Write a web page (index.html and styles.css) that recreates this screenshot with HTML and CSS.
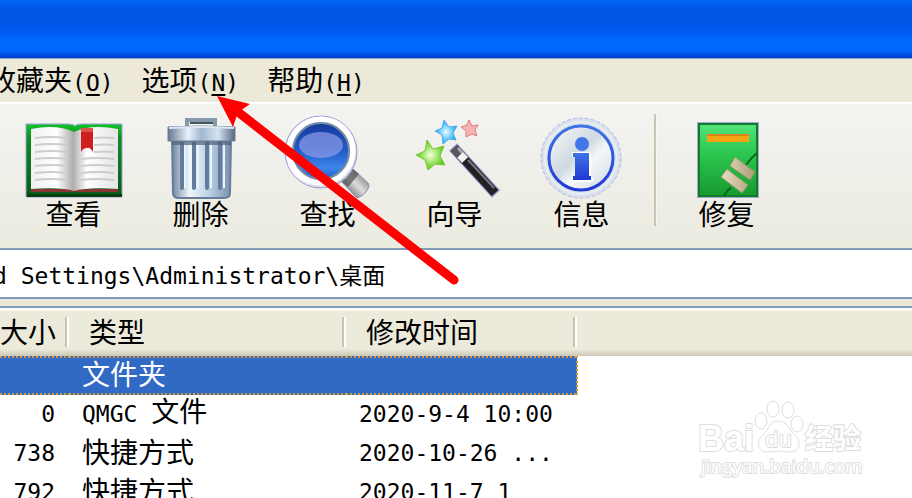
FILE: index.html
```html
<!DOCTYPE html>
<html lang="zh-CN">
  <head>
    <meta charset="UTF-8" />
    <meta name="viewport" content="width=device-width, initial-scale=1.0" />
    <title>桌面</title>
    <link rel="stylesheet" href="styles.css" />
  </head>

  <body>
    <header class="titlebar"></header>

    <nav class="menubar">
      <button class="menu-item">收藏夹<span class="key">(<u>O</u>)</span></button>
      <button class="menu-item">选项<span class="key">(<u>N</u>)</span></button>
      <button class="menu-item">帮助<span class="key">(<u>H</u>)</span></button>
    </nav>

    <div class="toolbar">
      <button class="tool">
        <svg class="tool-icon" viewBox="24 114 100 86">
          <defs>
            <linearGradient id="cover" x1="0" y1="0" x2="0" y2="1">
              <stop offset="0" stop-color="#12c429" />
              <stop offset="0.2" stop-color="#0f8c20" />
              <stop offset="1" stop-color="#08591a" />
            </linearGradient>
            <linearGradient id="page-left">
              <stop offset="0" stop-color="#f0f0f0" />
              <stop offset="0.6" stop-color="#fff" />
              <stop offset="1" stop-color="#aaa" />
            </linearGradient>
            <linearGradient id="page-right">
              <stop offset="0" stop-color="#b4b4b4" />
              <stop offset="0.3" stop-color="#fff" />
              <stop offset="1" stop-color="#e4e4e4" />
            </linearGradient>
          </defs>
          <path d="M26 124h42q6 0 7 2q1-2 7-2h40v73H26z" fill="url(#cover)" stroke="#9fa0e0" />
          <path d="M27 194h95v3H27z" fill="#06400f" />
          <path d="M31 189h43v3H31zM75 189h43v3H75z" fill="#8b3434" />
          <path d="M31 129q26-5 43 3v59q-12-4-43-2z" fill="url(#page-left)" />
          <path d="M74 132q17-8 44-3v60q-31-2-44 2z" fill="url(#page-right)" />
          <path
            d="M35 138q16-2 32 0M35 145q16-2 32 0M35 152q16-2 32 0M35 159q16-2 32 0M35 166q16-2 32 0M35 173q16-2 32 0M35 180q16-2 32 0M94 138q10-1 20 0M94 145q10-1 20 0M94 152q10-1 20 0M81 159q16-2 33 0M81 166q16-2 33 0M81 173q16-2 33 0M81 180q16-2 33 0"
            fill="none"
            stroke="#cdcdcd"
            stroke-width="2"
          />
          <path d="M81 128h12v24q-3-5-6-4q-4 0-6 4z" fill="#cf1e1e" />
          <path d="M81 128h12v4H81z" fill="#e0514a" />
        </svg>
        <span class="tool-label">查看</span>
      </button>
      <button class="tool">
        <svg class="tool-icon" viewBox="151 114 100 86">
          <defs>
            <linearGradient id="lid">
              <stop offset="0" stop-color="#64788f" />
              <stop offset="0.3" stop-color="#e9f2fa" />
              <stop offset="0.5" stop-color="#9fb7d0" />
              <stop offset="0.75" stop-color="#d5e3f2" />
              <stop offset="1" stop-color="#536981" />
            </linearGradient>
            <linearGradient id="can">
              <stop offset="0" stop-color="#6f859d" />
              <stop offset="0.3" stop-color="#f1f7fc" />
              <stop offset="0.65" stop-color="#b7cde4" />
              <stop offset="1" stop-color="#7890ac" />
            </linearGradient>
          </defs>
          <path d="M187 127v-7h28v7" fill="none" stroke="#8599ab" stroke-width="4" />
          <path d="M190 123h23" stroke="#445564" stroke-width="2" />
          <path d="M172 139h59l-1 54q0 5-6 5h-45q-6 0-6-5z" fill="url(#can)" stroke="#667d9c" stroke-width="2" />
          <path d="M182 143v45M194 143v45M207 143v45M220 143v45" stroke="#627d9b" stroke-width="4" stroke-linecap="round" />
          <path d="M185 143v45M198 143v45M211 143v45M224 143v45" stroke="#eaf3fb" stroke-width="2" />
          <path d="M172 141h59v4h-59z" fill="#4d6075" opacity="0.7" />
          <path d="M168 127q33-2 67 0v14h-67z" fill="url(#lid)" stroke="#687e97" />
          <path d="M169 128q32-2 65 0" fill="none" stroke="#dce8f2" stroke-width="2" />
        </svg>
        <span class="tool-label">删除</span>
      </button>
      <button class="tool">
        <svg class="tool-icon" viewBox="278 114 100 86">
          <defs>
            <linearGradient id="lens" x1="0" y1="0" x2="0" y2="1">
              <stop offset="0" stop-color="#153a9c" />
              <stop offset="0.5" stop-color="#225cc8" />
              <stop offset="0.8" stop-color="#3d86e8" />
              <stop offset="1" stop-color="#2258d0" />
            </linearGradient>
            <linearGradient id="rim" x1="0" y1="0" x2="1" y2="1">
              <stop offset="0" stop-color="#bcc9d6" />
              <stop offset="0.4" stop-color="#fff" />
              <stop offset="1" stop-color="#b9bec4" />
            </linearGradient>
            <linearGradient id="grip" x1="0" y1="1" x2="1" y2="0">
              <stop offset="0" stop-color="#333" />
              <stop offset="0.5" stop-color="#ddd" />
              <stop offset="1" stop-color="#555" />
            </linearGradient>
          </defs>
          <path d="M341 181l12-12l15 14q3 3-3 10q-6 6-9 4z" fill="url(#grip)" stroke="#8e8ebb" />
          <path d="M341 181l12-12l6 5l-11 13z" fill="#4c4f50" opacity="0.7" />
          <circle cx="321" cy="152" r="36" fill="url(#rim)" stroke="#9a99dd" stroke-width="1" />
          <circle cx="321" cy="151" r="32" fill="none" stroke="#fff" stroke-width="5" />
          <circle cx="321" cy="151" r="28" fill="url(#lens)" stroke="#7189a5" stroke-width="2" />
          <ellipse cx="321" cy="145" rx="22" ry="13" fill="#96a2ec" opacity="0.65" />
        </svg>
        <span class="tool-label">查找</span>
      </button>
      <button class="tool">
        <svg class="tool-icon" viewBox="405 114 100 86">
          <defs>
            <radialGradient id="star-blue">
              <stop offset="0" stop-color="#e8fbff" />
              <stop offset="1" stop-color="#12a9f2" />
            </radialGradient>
            <radialGradient id="star-green">
              <stop offset="0" stop-color="#f4ffd9" />
              <stop offset="1" stop-color="#55cc08" />
            </radialGradient>
          </defs>
          <path d="M444 120l5 7l8-1l-4 7l3 7l-7-1l-6 5l-1-9l-7-4l7-3z" fill="url(#star-blue)" stroke="#52aaf0" />
          <path d="M469 120l3 6l6-1l-3 5l2 6l-5-2l-6 3v-6l-5-4l6-2z" fill="#f4b4b4" stroke="#e27983" />
          <path d="M427 140l6 9l11-3l-4 10l5 9l-10-1l-7 6l-3-10l-9-5l9-4z" fill="url(#star-green)" stroke="#78c53c" />
          <path d="M453 147l43 47" stroke="#9b98cf" stroke-width="11" />
          <path d="M454 148l41 45" stroke="#202225" stroke-width="9" />
          <path d="M468 160l26 28" stroke="#777b80" stroke-width="2" />
          <path d="M454 148l11 12" stroke="#55585c" stroke-width="9" />
          <path d="M458 148l9 10" stroke="#a5a8ab" stroke-width="3" />
          <path d="M460 155l5 5" stroke="#f1f1f1" stroke-width="8" />
        </svg>
        <span class="tool-label">向导</span>
      </button>
      <button class="tool">
        <svg class="tool-icon" viewBox="532 114 100 86">
          <defs>
            <linearGradient id="disc" x1="0" y1="0" x2="1" y2="1">
              <stop offset="0" stop-color="#f7f9fb" />
              <stop offset="0.45" stop-color="#cfd9e1" />
              <stop offset="0.6" stop-color="#f4f7fa" />
              <stop offset="1" stop-color="#ccd7e0" />
            </linearGradient>
            <linearGradient id="info-blue" x1="0" y1="0" x2="0" y2="1">
              <stop offset="0" stop-color="#3d74e5" />
              <stop offset="1" stop-color="#2138d5" />
            </linearGradient>
          </defs>
          <circle cx="581" cy="158" r="40" fill="#d9e1ea" stroke="#b8b5eb" stroke-dasharray="4 2" />
          <circle cx="581" cy="158" r="36" fill="none" stroke="#e9eef3" stroke-width="2" />
          <circle cx="581" cy="158" r="32" fill="url(#disc)" stroke="url(#info-blue)" stroke-width="3" />
          <path d="M572 152h19v26h2v4h-21v-4h3v-21h-3z" fill="#fff" />
          <circle cx="582" cy="144" r="7" fill="#3f78e6" />
          <path d="M573 153h16v23h2v4h-18v-4h2v-19h-2z" fill="url(#info-blue)" />
        </svg>
        <span class="tool-label">信息</span>
      </button>
      <span class="separator"></span>
      <button class="tool">
        <svg class="tool-icon" viewBox="677 114 100 86">
          <defs>
            <linearGradient id="box" x1="0" y1="0" x2="0" y2="1">
              <stop offset="0" stop-color="#55e47c" />
              <stop offset="0.4" stop-color="#2dc750" />
              <stop offset="1" stop-color="#169a30" />
            </linearGradient>
            <linearGradient id="plug">
              <stop offset="0" stop-color="#e8dfc5" />
              <stop offset="1" stop-color="#ad9c76" />
            </linearGradient>
          </defs>
          <path d="M697 122h62v76h-62z" fill="#9ea8d9" />
          <path d="M699 124h58v72h-58z" fill="url(#box)" stroke="#117c26" stroke-width="2" />
          <path d="M707 134h42v8h-42z" fill="#f9a313" />
          <path d="M707 134h42v2h-42z" fill="#d98517" />
          <path d="M757 153q-5 4-11 12M731 188q-4 2-7 8" fill="none" stroke="#08691c" stroke-width="2" />
          <path d="M735 157l20 15l-5 8l-20-14zM727 169l21 16l-6 8l-21-16z" fill="url(#plug)" stroke="#8f9b64" />
        </svg>
        <span class="tool-label">修复</span>
      </button>
    </div>

    <div class="address">
      <input class="address-input" type="text" aria-label="地址" value="d Settings\Administrator\桌面" />
    </div>

    <main class="list">
      <table class="files">
        <thead>
          <tr>
            <th class="size">大小</th>
            <th class="type">类型</th>
            <th class="date">修改时间</th>
            <th class="rest"></th>
          </tr>
        </thead>
        <tbody>
          <tr class="selected">
            <td class="size"></td>
            <td class="type">文件夹</td>
            <td class="date"></td>
          </tr>
          <tr>
            <td class="size"><span class="key">0</span></td>
            <td class="type"><span class="key">QMGC </span>文件</td>
            <td class="date"><span class="key">2020-9-4 10:00</span></td>
          </tr>
          <tr>
            <td class="size"><span class="key">738</span></td>
            <td class="type">快捷方式</td>
            <td class="date"><span class="key">2020-10-26 ...</span></td>
          </tr>
          <tr>
            <td class="size"><span class="key">792</span></td>
            <td class="type">快捷方式</td>
            <td class="date"><span class="key">2020-11-7 1</span></td>
          </tr>
        </tbody>
      </table>
    </main>

    <svg class="arrow" width="250" height="200" viewBox="213 90 250 200">
      <path d="M238 112L454 280" stroke="#f00" stroke-width="9" stroke-linecap="round" />
      <path d="M217 96l33 8l-10 7l-3 4l-4 12z" fill="#f00" />
    </svg>

    <svg class="watermark" width="170" height="84" viewBox="696 398 170 84">
      <g class="outline">
        <ellipse cx="761" cy="421" rx="6" ry="8" />
        <ellipse cx="773" cy="409" rx="6" ry="8" />
        <ellipse cx="788" cy="410" rx="6" ry="8" />
        <ellipse cx="797" cy="424" rx="6" ry="8" />
        <path d="M778 421c-9 0-9 9-15 14c-8 7-5 17 4 17q11-2 22 0c11 1 13-11 6-17c-7-6-7-14-17-14z" />
        <text class="brand" x="698" y="451">Bai</text>
        <text class="du" x="765" y="447">du</text>
        <text class="brand-cn" x="805" y="449">经验</text>
        <text class="site" x="701" y="473">jingyan.baidu.com</text>
      </g>
    </svg>
  </body>
</html>
```

FILE: styles.css
```css
* {
  margin: 0;
  padding: 0;
  box-sizing: border-box;
}

body {
  position: relative;
  height: 100vh;
  overflow: hidden;
  background-color: white;
  color: black;
  font-family: "Noto Sans CJK SC", sans-serif;
  font-size: 28px;
  line-height: 28px;
}

button {
  border: none;
  background: none;
  color: inherit;
  font: inherit;
}

/* latin letters and digits are half as wide as a Chinese character */
.key {
  font-family: "DejaVu Sans Mono", monospace;
  font-size: 23px;
  white-space: pre;
}

.titlebar {
  height: 59px;
  border-bottom: 1px solid #8ba4d6;
  background: linear-gradient(
    #0468f5 0,
    #0057e5 8px,
    #0055e5 22px,
    #005cf4 34px,
    #006aff 42px,
    #0068ff 50px,
    #0047d8 56px,
    #003dcc 58px
  );
}

.menubar {
  display: flex;
  align-items: center;
  gap: 28px;
  height: 43px;
  margin-left: -12px;
  background-color: #ece9d8;
}

.menu-item {
  white-space: nowrap;
}

.menu-item u {
  text-decoration-thickness: 2px;
  text-underline-offset: 3px;
}

.toolbar {
  display: flex;
  padding: 10px 10px 22px;
  border-top: 2px solid white;
  background: linear-gradient(#f3f3f1, #ecebe0);
}

.tool {
  display: flex;
  flex-direction: column;
  align-items: center;
  width: 127px;
}

.tool-icon {
  width: 100px;
  height: 86px;
}

.tool-label {
  line-height: 26px;
}

.separator {
  width: 3px;
  margin: 0 6px 0 9px;
  border-left: 2px solid #c9c5b0;
  border-right: 1px solid #f8f7f2;
}

.address {
  padding-bottom: 7px;
  background: linear-gradient(#d2cebc, #ece9d8);
}

.address-input {
  display: block;
  width: 100%;
  height: 51px;
  border: 2px solid #7f9db9;
  border-left: none;
  border-right: none;
  outline: none;
  background-color: white;
  font-family: "DejaVu Sans Mono", "Noto Sans CJK SC", monospace;
  font-size: 23px;
  text-indent: -7px;
}

.list {
  border-top: 2px solid #7f9db9;
}

.files {
  width: 100%;
  border-collapse: collapse;
  table-layout: fixed;
}

.files th {
  height: 48px;
  padding-bottom: 3px;
  background: linear-gradient(#fff 0, #fff 2px, #ebeadb 3px, #ebeadb 41px, #cbc7b8 48px);
  font-weight: normal;
  text-align: left;
  white-space: nowrap;
}

.files th:not(.rest) {
  background:
    linear-gradient(#c7c5b2, #c7c5b2) right 2px top 9px / 2px 30px no-repeat,
    linear-gradient(#fff, #fff) right 0 top 9px / 2px 30px no-repeat,
    linear-gradient(#fff 0, #fff 2px, #ebeadb 3px, #ebeadb 41px, #cbc7b8 48px);
}

.files td {
  height: 39px;
  padding-bottom: 5px;
  white-space: nowrap;
}

.files .size {
  width: 69px;
  padding-right: 14px;
  text-align: right;
}

.files .type {
  width: 277px;
  padding-left: 13px;
}

.files .date {
  width: 231px;
  padding-left: 13px;
}

.files th.type,
.files th.date {
  padding-left: 20px;
}

.selected td {
  background:
    repeating-linear-gradient(90deg, #d39a3c 0 2px, #316ac5 2px 4px) top / 100% 2px no-repeat,
    repeating-linear-gradient(90deg, #d39a3c 0 2px, #316ac5 2px 4px) bottom / 100% 2px no-repeat,
    #316ac5;
  color: white;
}

.selected .date {
  border-right: 2px dotted #d39a3c;
}

.arrow {
  position: absolute;
  left: 213px;
  top: 90px;
}

.watermark {
  position: absolute;
  right: 46px;
  bottom: 16px;
}

.outline {
  fill: white;
  stroke: #dedede;
  stroke-width: 1px;
}

.outline text {
  stroke-width: 2px;
  paint-order: stroke;
}

.brand {
  font-family: "Liberation Sans", sans-serif;
  font-size: 36px;
  font-weight: bold;
}

.du {
  font-family: "Open Sans", sans-serif;
  font-size: 22px;
}

.brand-cn {
  font-family: "Noto Sans CJK SC", sans-serif;
  font-size: 28px;
  font-weight: bold;
}

.site {
  font-family: "Open Sans", sans-serif;
  font-size: 19px;
}
```
